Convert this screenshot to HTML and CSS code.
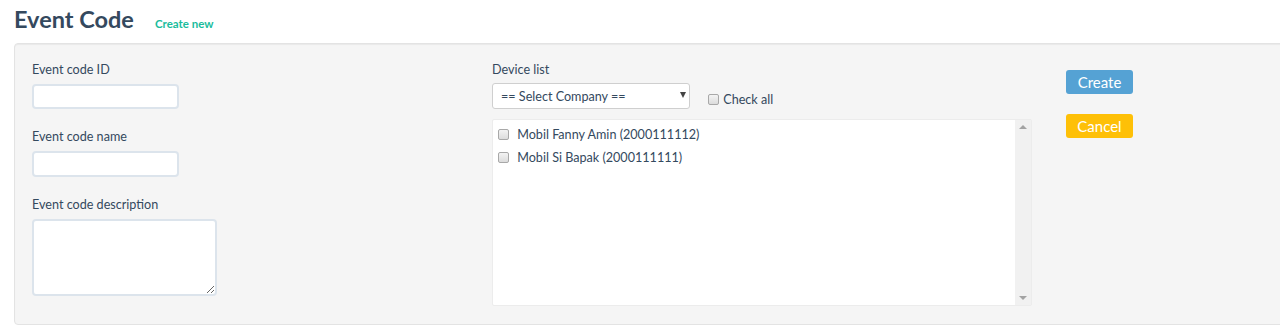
FILE: index.html
```html
<!DOCTYPE html>
<html lang="en">
<head>
    <meta charset="UTF-8">
    <meta name="viewport" content="width=device-width, initial-scale=1.0">
    <title>Event Code</title>
    <link rel="stylesheet" href="styles.css">
</head>
<body>
    <!-- Page Title -->
    <div class="page-title">
        <h1>Event Code</h1>
        <a href="#" class="create-link">Create new</a>
    </div>

    <!-- Form Panel -->
    <div class="well">
        <div class="col-left">
            <label for="codeId">Event code ID</label>
            <input type="text" id="codeId" class="field">

            <label for="codeName">Event code name</label>
            <input type="text" id="codeName" class="field">

            <label for="codeDesc">Event code description</label>
            <textarea id="codeDesc" class="field area"></textarea>
        </div>

        <div class="col-middle">
            <label>Device list</label>
            <div class="device-top">
                <div class="select-wrap">
                    <select class="company">
                        <option>== Select Company ==</option>
                    </select>
                </div>
                <label class="check-all"><input type="checkbox" class="box"> Check all</label>
            </div>
            <div class="device-list">
                <div class="devices">
                    <label class="device"><input type="checkbox" class="box"> Mobil Fanny Amin (2000111112)</label>
                    <label class="device"><input type="checkbox" class="box"> Mobil Si Bapak (2000111111)</label>
                </div>
                <div class="scroll-track">
                    <span class="arrow-up"></span>
                    <span class="arrow-down"></span>
                </div>
            </div>
        </div>

        <div class="col-right">
            <button class="btn btn-create">Create</button>
            <button class="btn btn-cancel">Cancel</button>
        </div>
    </div>
</body>
</html>
```

FILE: styles.css
```css
/* Event code page */
body {
    font-family: Lato, "Open Sans", sans-serif;
    margin: 0;
    padding: 0 0 0 14px;
    background-color: #fff;
    color: #34495e;
    overflow: hidden;
}
.page-title {
    display: flex;
    align-items: baseline;
    height: 43px;
}
h1 {
    font-size: 23.5px;
    font-weight: 700;
    margin: 4px 0 0 0;
    line-height: 30px;
}
.create-link {
    color: #1abc9c;
    font-size: 11.5px;
    font-weight: 700;
    text-decoration: none;
    margin-left: 21px;
}
.well {
    display: flex;
    box-sizing: border-box;
    background-color: #f5f5f5;
    border: 1px solid #e3e3e3;
    border-radius: 4px;
    box-shadow: inset 0 1px 1px rgba(0, 0, 0, 0.05);
    height: 282px;
    margin-right: -20px;
    padding: 17px 0 0 17px;
}
label {
    display: block;
    font-size: 12.6px;
    line-height: 18px;
    margin-bottom: 5px;
}
.col-left {
    width: 460px;
}
.field {
    display: block;
    box-sizing: border-box;
    width: 147px;
    height: 25px;
    border: 2px solid #dce4ec;
    border-radius: 4px;
    background: #fff;
    margin: 0 0 19px 0;
    font-family: inherit;
}
#codeName {
    height: 26px;
}
.area {
    width: 185px;
    height: 77px;
    margin-bottom: 0;
}
.col-middle {
    width: 574px;
}
.device-top {
    display: flex;
    align-items: flex-start;
    margin-top: -1px;
}
.select-wrap {
    position: relative;
    width: 198px;
}
.select-wrap::after {
    content: "";
    position: absolute;
    right: 4px;
    top: 9px;
    border-left: 3px solid transparent;
    border-right: 3px solid transparent;
    border-top: 6px solid #444;
    pointer-events: none;
}
.company {
    -webkit-appearance: none;
    appearance: none;
    width: 198px;
    height: 26px;
    border: 1px solid #cfcfcf;
    border-radius: 3px;
    background: #fff;
    color: #34495e;
    font-family: inherit;
    font-size: 12.6px;
    padding: 0 8px;
}
.box {
    -webkit-appearance: none;
    appearance: none;
    width: 11px;
    height: 11px;
    margin: 0 5px 0 0;
    border: 1px solid #a8a8a8;
    border-radius: 2px;
    background: linear-gradient(#f3f3f3, #dcdcdc);
    vertical-align: -1px;
}
.check-all {
    margin: 8px 0 0 18px;
    padding: 0;
}
.check-all .box {
    margin-right: 1px;
}
.device-list {
    display: flex;
    box-sizing: border-box;
    width: 540px;
    height: 187px;
    margin: 10px 0 0 0;
    background: #fff;
    border: 1px solid #ececec;
    border-radius: 2px;
}
.devices {
    flex: 1;
    padding: 3px 0 0 5px;
}
.device {
    margin: 0;
    line-height: 23px;
}
.scroll-track {
    display: flex;
    flex-direction: column;
    justify-content: space-between;
    align-items: center;
    width: 16px;
    background: #f1f1f1;
    padding: 5px 0;
}
.arrow-up,
.arrow-down {
    width: 0;
    height: 0;
    border-left: 4px solid transparent;
    border-right: 4px solid transparent;
}
.arrow-up {
    border-bottom: 4px solid #a3a3a3;
}
.arrow-down {
    border-top: 4px solid #a3a3a3;
}
.col-right {
    display: flex;
    flex-direction: column;
    align-items: flex-start;
    gap: 20px;
    padding-top: 9px;
}
.btn {
    width: 67px;
    height: 24px;
    border: none;
    border-radius: 3px;
    color: #fff;
    font-family: inherit;
    font-size: 15px;
    padding: 0;
    cursor: pointer;
}
.btn-create {
    background-color: #55a2d4;
}
.btn-cancel {
    background-color: #fec007;
}
```
